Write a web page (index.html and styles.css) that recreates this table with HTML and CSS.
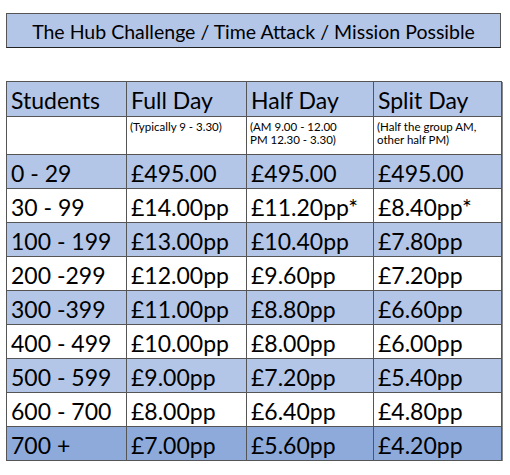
FILE: index.html
```html
<!DOCTYPE html>
<html lang="en">
<head>
    <meta charset="UTF-8">
    <title>The Hub Challenge Prices</title>
    <link rel="stylesheet" href="styles.css">
</head>
<body>
    <div class="title">The Hub Challenge / Time Attack / Mission Possible</div>

    <table class="prices">
        <colgroup>
            <col class="c1"><col class="c2"><col class="c3"><col class="c4">
        </colgroup>
        <tr class="head">
            <th>Students</th><th>Full Day</th><th>Half Day</th><th>Split Day</th>
        </tr>
        <tr class="notes">
            <td></td>
            <td>(Typically 9 - 3.30)</td>
            <td>(AM 9.00 - 12.00<br>PM 12.30 - 3.30)</td>
            <td>(Half the group AM,<br>other half PM)</td>
        </tr>
        <tr class="blue"><td>0 - 29</td><td>£495.00</td><td>£495.00</td><td>£495.00</td></tr>
        <tr><td>30 - 99</td><td>£14.00pp</td><td>£11.20pp*</td><td>£8.40pp*</td></tr>
        <tr class="blue"><td>100 - 199</td><td>£13.00pp</td><td>£10.40pp</td><td>£7.80pp</td></tr>
        <tr><td>200 -299</td><td>£12.00pp</td><td>£9.60pp</td><td>£7.20pp</td></tr>
        <tr class="blue"><td>300 -399</td><td>£11.00pp</td><td>£8.80pp</td><td>£6.60pp</td></tr>
        <tr><td>400 - 499</td><td>£10.00pp</td><td>£8.00pp</td><td>£6.00pp</td></tr>
        <tr class="blue"><td>500 - 599</td><td>£9.00pp</td><td>£7.20pp</td><td>£5.40pp</td></tr>
        <tr><td>600 - 700</td><td>£8.00pp</td><td>£6.40pp</td><td>£4.80pp</td></tr>
        <tr class="dark"><td>700 +</td><td>£7.00pp</td><td>£5.60pp</td><td>£4.20pp</td></tr>
    </table>
</body>
</html>
```

FILE: styles.css
```css
body {
    margin: 0;
    padding: 13px 0 0 6px;
    background-color: #fff;
    font-family: Lato, "Liberation Sans", sans-serif;
    color: #000;
}

.title {
    width: 493px;
    height: 33px;
    line-height: 35px;
    background-color: #b4c6e7;
    border: 1px solid #555;
    border-bottom-color: #222;
    text-align: center;
    font-size: 19.5px;
}

.prices {
    margin-top: 33px;
    border-collapse: collapse;
    table-layout: fixed;
    width: 495px;
    border: 1px solid #444;
    box-shadow: 1px 1px 0 #888;
}

.c1 { width: 120px; }
.c2 { width: 120px; }
.c3 { width: 127px; }
.c4 { width: 128px; }

.prices th,
.prices td {
    border: 1px solid #555;
    padding: 2px 0 0 4px;
    text-align: left;
    font-weight: normal;
    font-size: 23px;
    line-height: 30px;
    height: 31px;
    white-space: nowrap;
    overflow: hidden;
}

.head th {
    background-color: #b4c6e7;
    height: 32px;
}

.notes td {
    font-size: 11.5px;
    line-height: 13px;
    height: 34px;
    vertical-align: top;
    padding: 3px 0 0 3px;
}

.blue td {
    background-color: #b4c6e7;
}

.dark td {
    background-color: #8eaadb;
}
```
